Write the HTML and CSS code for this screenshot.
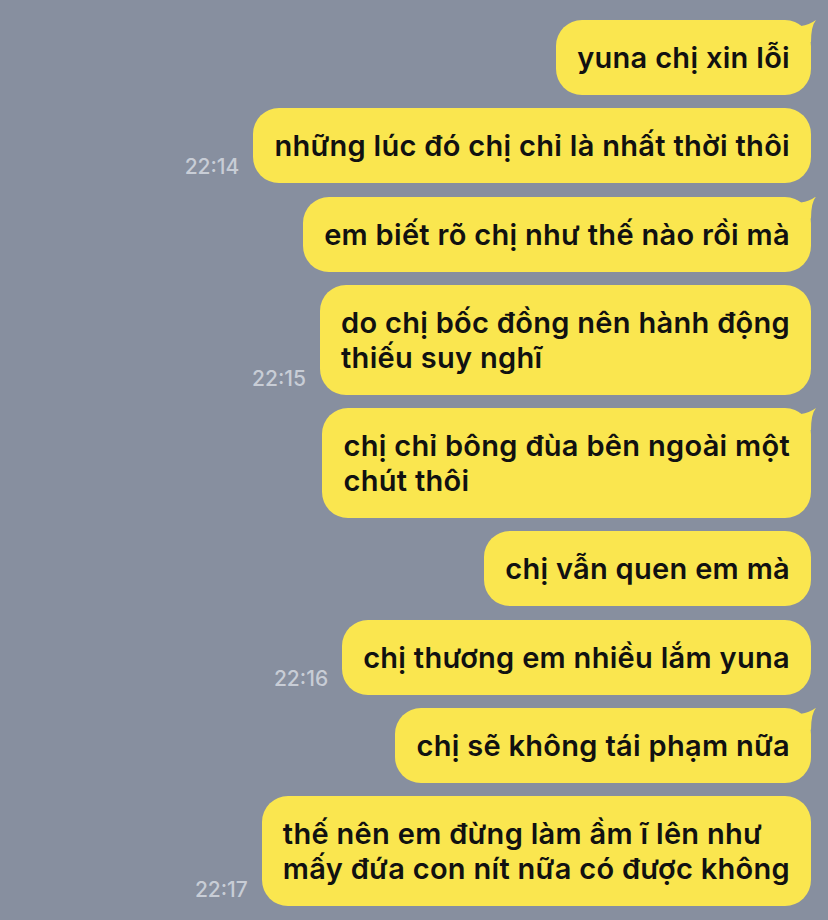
FILE: index.html
```html
<!DOCTYPE html>
<html lang="vi">
<head>
    <meta charset="UTF-8">
    <meta name="viewport" content="width=device-width, initial-scale=1.0">
    <title>Chat</title>
    <link rel="stylesheet" href="styles.css">
</head>
<body>
    <div class="chat">
        <div class="row">
            <div class="bubble tail">yuna chị xin lỗi</div>
        </div>
        <div class="row">
            <span class="time">22:14</span>
            <div class="bubble">những lúc đó chị chỉ là nhất thời thôi</div>
        </div>
        <div class="row">
            <div class="bubble tail">em biết rõ chị như thế nào rồi mà</div>
        </div>
        <div class="row">
            <span class="time">22:15</span>
            <div class="bubble">do chị bốc đồng nên hành động<br>thiếu suy nghĩ</div>
        </div>
        <div class="row">
            <div class="bubble tail">chị chỉ bông đùa bên ngoài một<br>chút thôi</div>
        </div>
        <div class="row">
            <div class="bubble">chị vẫn quen em mà</div>
        </div>
        <div class="row">
            <span class="time">22:16</span>
            <div class="bubble">chị thương em nhiều lắm yuna</div>
        </div>
        <div class="row">
            <div class="bubble tail">chị sẽ không tái phạm nữa</div>
        </div>
        <div class="row">
            <span class="time">22:17</span>
            <div class="bubble">thế nên em đừng làm ầm ĩ lên như<br>mấy đứa con nít nữa có được không</div>
        </div>
    </div>
</body>
</html>
```

FILE: styles.css
```css
body {
    margin: 0;
    background-color: #878f9f;
    font-family: Inter, "Noto Sans", sans-serif;
}
.chat {
    display: flex;
    flex-direction: column;
    gap: 13.25px;
    padding: 20px 17px 0 0;
}
.row {
    display: flex;
    justify-content: flex-end;
    align-items: flex-end;
    gap: 14px;
}
.time {
    font-size: 21px;
    font-weight: 500;
    color: #c8cdd6;
    margin-bottom: 4px;
}
.bubble {
    position: relative;
    background-color: #fae64f;
    color: #111;
    font-size: 29px;
    font-weight: 600;
    letter-spacing: 0.3px;
    line-height: 35px;
    padding: 20px 21px;
    border-radius: 26px;
}
/* little horn on the first bubble of a group */
.bubble.tail::after {
    content: "";
    position: absolute;
    top: 0;
    right: -5px;
    width: 19px;
    height: 22px;
    background: #fae64f;
    clip-path: path("M0 4 L4 6 Q12 5 19 0 Q14 6 14 22 L0 22 Z");
}
```
